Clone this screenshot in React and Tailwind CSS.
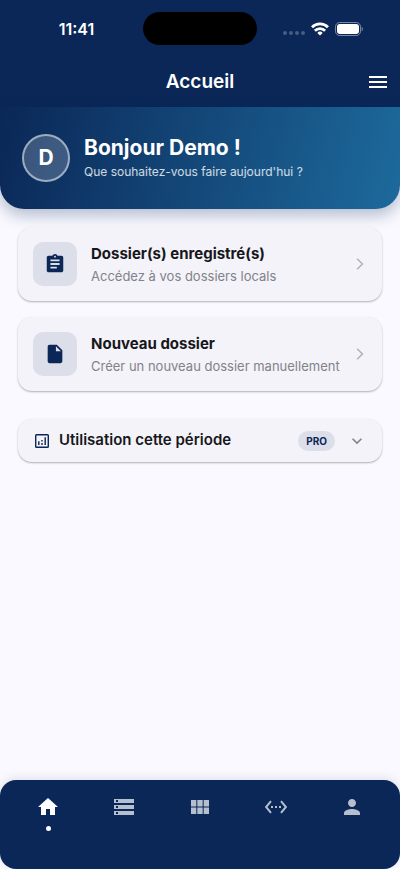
import {
  MdArrowForwardIos,
  MdAssignment,
  MdHome,
  MdInsertDriveFile,
  MdKeyboardArrowDown,
  MdMenu,
  MdPerson,
  MdSettingsEthernet,
  MdStorage,
  MdViewModule,
} from 'react-icons/md';

const actions = [
  {
    id: 'saved',
    icon: MdAssignment,
    title: 'Dossier(s) enregistré(s)',
    subtitle: 'Accédez à vos dossiers locals',
  },
  {
    id: 'new',
    icon: MdInsertDriveFile,
    title: 'Nouveau dossier',
    subtitle: 'Créer un nouveau dossier manuellement',
  },
];

const tabs = [
  { id: 'home', label: 'Accueil', icon: MdHome, active: true },
  { id: 'storage', label: 'Dossiers', icon: MdStorage },
  { id: 'modules', label: 'Modules', icon: MdViewModule },
  { id: 'network', label: 'Connexion', icon: MdSettingsEthernet },
  { id: 'profile', label: 'Profil', icon: MdPerson },
];

function StatusBar() {
  return (
    <div className="grid grid-cols-[1fr_auto_1fr] items-center pt-3">
      <span className="pl-2.5 text-center text-base font-semibold">11:41</span>
      <div className="h-[33px] w-[114px] rounded-full bg-black" />
      <div className="flex items-center justify-end gap-1.5 pr-[37px]">
        <div className="flex gap-0.5 pt-2">
          <span className="size-1 rounded-full bg-white/25" />
          <span className="size-1 rounded-full bg-white/25" />
          <span className="size-1 rounded-full bg-white/25" />
          <span className="size-1 rounded-full bg-white/25" />
        </div>
        <svg viewBox="0 0 18 14" className="h-3.5 w-4.5" fill="none" stroke="currentColor" strokeWidth="2.7">
          <path d="M1 5.2a11.4 11.4 0 0 1 16 0" />
          <path d="M3.9 8.7a7.1 7.1 0 0 1 10.2 0" />
          <path d="M9 13.6 6.3 10.9a3.9 3.9 0 0 1 5.4 0z" fill="currentColor" stroke="none" />
        </svg>
        <svg viewBox="0 0 28 14" className="h-3.5 w-7">
          <rect x="0.5" y="0.5" width="25" height="13" rx="4.2" fill="none" stroke="white" strokeOpacity="0.45" />
          <rect x="2" y="2" width="22" height="10" rx="3" fill="white" />
          <path d="M26.7 4.8c1.4.4 1.4 4 0 4.4z" fill="white" fillOpacity="0.5" />
        </svg>
      </div>
    </div>
  );
}

function UsageIcon() {
  return (
    <svg viewBox="0 0 18 18" className="mr-2 size-4.5" fill="none" stroke="#0a2757" strokeWidth="1.4">
      <rect x="2.7" y="2.7" width="12.6" height="12.6" rx="0.8" />
      <path d="M5.8 9.2v3.9M12.2 5.2v7.9M9 11v2.1M9 8.1v1.5" />
    </svg>
  );
}

function ActionCard({ icon: Icon, title, subtitle }) {
  return (
    <button
      type="button"
      className="flex w-full items-center rounded-[14px] bg-[#f3f3f9] p-[15px] text-left shadow-[0_1px_2px_rgba(0,0,0,0.3)]"
    >
      <span className="flex size-11 shrink-0 items-center justify-center rounded-[10px] bg-[#dcdfea] text-[#0a2757]">
        <Icon size={22} />
      </span>
      <span className="ml-3.5 min-w-0 flex-1">
        <span className="block text-[15px] leading-6 font-bold text-[#17171b]">{title}</span>
        <span className="block text-[13px] leading-5 text-[#828289]">{subtitle}</span>
      </span>
      <MdArrowForwardIos size={14} className="shrink-0 text-[#b0b0b5]" />
    </button>
  );
}

export default function App() {
  return (
    <div className="flex min-h-screen flex-col bg-[#f9f9ff] font-['Inter',sans-serif]">
      <header className="bg-[#0a2757] text-white">
        <StatusBar />
        <div className="grid h-[62px] grid-cols-[1fr_auto_1fr] items-center pt-3">
          <h1 className="col-start-2 text-[19px] font-semibold">Accueil</h1>
          <button type="button" aria-label="Menu" className="mr-2.5 justify-self-end">
            <MdMenu size={24} />
          </button>
        </div>
      </header>

      <section className="flex items-center gap-3.5 rounded-b-3xl bg-linear-[104deg] from-[#0a2757] to-[#1d6a9c] px-5.5 py-[27px] text-white shadow-[0_6px_16px_rgba(10,39,87,0.3)]">
        <div className="flex size-12 items-center justify-center rounded-full border-2 border-white/50 bg-white/20 text-[21px] font-bold">
          D
        </div>
        <div>
          <p className="text-[21px] leading-7 font-bold">Bonjour Demo !</p>
          <p className="text-xs leading-5 text-white/80">Que souhaitez-vous faire aujourd'hui ?</p>
        </div>
      </section>

      <main className="flex flex-1 flex-col px-4.5 py-4.5">
        <div className="flex flex-col gap-4">
          {actions.map((action) => (
            <ActionCard key={action.id} {...action} />
          ))}
        </div>

        <button
          type="button"
          className="mt-7 flex h-[43px] items-center rounded-[14px] bg-[#f3f3f9] px-[15px] text-left shadow-[0_1px_2px_rgba(0,0,0,0.3)]"
        >
          <UsageIcon />
          <span className="flex-1 text-[15px] font-semibold text-[#17171b]">Utilisation cette période</span>
          <span className="rounded-full bg-[#dcdfea] px-2 text-[10px] leading-5 font-bold text-[#0a2757]">PRO</span>
          <MdKeyboardArrowDown size={20} className="ml-3 text-[#828289]" />
        </button>
      </main>

      <nav className="flex h-[89px] rounded-2xl bg-[#0a2757] px-2.5 shadow-[0_-2px_10px_rgba(0,0,0,0.1)]">
        {tabs.map(({ id, label, icon: Icon, active }) => (
          <button
            key={id}
            type="button"
            aria-label={label}
            className={`flex flex-1 flex-col items-center gap-[7px] pt-[15px] ${active ? 'text-white' : 'text-[#b6bfcf]'}`}
          >
            <Icon size={24} />
            {active && <span className="size-[5px] rounded-full bg-white" />}
          </button>
        ))}
      </nav>
    </div>
  );
}
